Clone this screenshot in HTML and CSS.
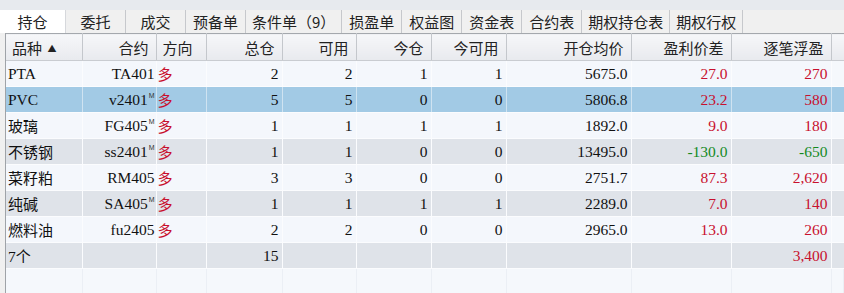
FILE: index.html
```html
<!DOCTYPE html>
<html lang="zh-CN">
<head>
  <meta charset="UTF-8">
  <link rel="stylesheet" href="styles.css">
  <title>持仓</title>
</head>
<body>

<div class="tabs">
  <div class="tab active">持仓</div>
  <div class="tab">委托</div>
  <div class="tab">成交</div>
  <div class="tab">预备单</div>
  <div class="tab">条件单（9）</div>
  <div class="tab">损盈单</div>
  <div class="tab">权益图</div>
  <div class="tab">资金表</div>
  <div class="tab">合约表</div>
  <div class="tab">期权持仓表</div>
  <div class="tab">期权行权</div>
</div>

<div class="grid">
  <table class="positions">
    <colgroup>
      <col style="width:76px"><col style="width:74px"><col style="width:50px">
      <col style="width:76px"><col style="width:74px"><col style="width:75px">
      <col style="width:75px"><col style="width:125px"><col style="width:100px">
      <col style="width:100px"><col>
    </colgroup>
    <thead>
      <tr>
        <th class="left">品种 <span class="sort">▲</span></th>
        <th>合约</th>
        <th class="left">方向</th>
        <th>总仓</th>
        <th>可用</th>
        <th>今仓</th>
        <th>今可用</th>
        <th>开仓均价</th>
        <th>盈利价差</th>
        <th>逐笔浮盈</th>
        <th class="rest"></th>
      </tr>
    </thead>
    <tbody>
      <tr>
        <td class="name">PTA</td><td class="code">TA401</td><td class="dir">多</td>
        <td class="num">2</td><td class="num">2</td><td class="num">1</td><td class="num">1</td>
        <td class="num">5675.0</td><td class="num up">27.0</td><td class="num up">270</td><td class="rest"></td>
      </tr>
      <tr class="selected">
        <td class="name">PVC</td><td class="code">v2401<sup class="m">M</sup></td><td class="dir">多</td>
        <td class="num">5</td><td class="num">5</td><td class="num">0</td><td class="num">0</td>
        <td class="num">5806.8</td><td class="num up">23.2</td><td class="num up">580</td><td class="rest"></td>
      </tr>
      <tr>
        <td class="name cn">玻璃</td><td class="code">FG405<sup class="m">M</sup></td><td class="dir">多</td>
        <td class="num">1</td><td class="num">1</td><td class="num">1</td><td class="num">1</td>
        <td class="num">1892.0</td><td class="num up">9.0</td><td class="num up">180</td><td class="rest"></td>
      </tr>
      <tr class="alt">
        <td class="name cn">不锈钢</td><td class="code">ss2401<sup class="m">M</sup></td><td class="dir">多</td>
        <td class="num">1</td><td class="num">1</td><td class="num">0</td><td class="num">0</td>
        <td class="num">13495.0</td><td class="num down">-130.0</td><td class="num down">-650</td><td class="rest"></td>
      </tr>
      <tr>
        <td class="name cn">菜籽粕</td><td class="code">RM405</td><td class="dir">多</td>
        <td class="num">3</td><td class="num">3</td><td class="num">0</td><td class="num">0</td>
        <td class="num">2751.7</td><td class="num up">87.3</td><td class="num up">2,620</td><td class="rest"></td>
      </tr>
      <tr class="alt">
        <td class="name cn">纯碱</td><td class="code">SA405<sup class="m">M</sup></td><td class="dir">多</td>
        <td class="num">1</td><td class="num">1</td><td class="num">1</td><td class="num">1</td>
        <td class="num">2289.0</td><td class="num up">7.0</td><td class="num up">140</td><td class="rest"></td>
      </tr>
      <tr>
        <td class="name cn">燃料油</td><td class="code">fu2405</td><td class="dir">多</td>
        <td class="num">2</td><td class="num">2</td><td class="num">0</td><td class="num">0</td>
        <td class="num">2965.0</td><td class="num up">13.0</td><td class="num up">260</td><td class="rest"></td>
      </tr>
      <tr class="alt total">
        <td class="name">7<span class="cn">个</span></td><td></td><td></td>
        <td class="num">15</td><td></td><td></td><td></td>
        <td></td><td></td><td class="num up">3,400</td><td class="rest"></td>
      </tr>
      <tr class="filler">
        <td></td><td></td><td></td><td></td><td></td><td></td><td></td><td></td><td></td><td></td><td class="rest"></td>
      </tr>
    </tbody>
  </table>
</div>

</body>
</html>
```

FILE: styles.css
```css
body {
  margin: 0;
  padding: 0;
  background-color: #f0f0f0;
  font-family: "Noto Sans CJK SC", "Liberation Sans", sans-serif;
  color: #1a1a1a;
  overflow: hidden;
}

.tabs {
  display: flex;
  height: 33px;
  padding-top: 10px;
  box-sizing: border-box;
  background: linear-gradient(#e7eaee 0, #e7eaee 10px, #f0f0f0 10px);
}

.tab {
  min-width: 60px;
  padding: 0 6px;
  box-sizing: border-box;
  height: 23px;
  line-height: 23px;
  font-size: 15px;
  text-align: center;
  color: #222;
  border-right: 1px solid #c6c8cc;
  background-color: #f0f0f0;
}

.tab.active {
  width: 66px;
  background-color: #fff;
  border-right: 1px solid #d6d8dc;
}

.grid {
  margin-left: 5px;
  border-left: 1px solid #9fa3a8;
  background-color: #f5f8fc;
  height: 260px;
}

.positions {
  border-collapse: collapse;
  table-layout: fixed;
  width: 100%;
}

.positions th {
  height: 26px;
  padding: 0 7px 0 0;
  font-size: 15px;
  font-weight: normal;
  text-align: right;
  color: #222;
  white-space: nowrap;
  background: linear-gradient(#f6f7f9, #e8eaee);
  border-top: 1px solid #a4a8ad;
  border-bottom: 1px solid #c9ccd1;
  border-right: 1px solid #c4c7cc;
}

.positions th.left {
  text-align: left;
  padding-left: 6px;
}

.positions th.rest {
  border-right: none;
}

.sort {
  font-size: 9px;
  vertical-align: 2px;
  margin-left: 2px;
}

.positions td {
  height: 25px;
  padding: 0 3px 0 0;
  font-family: "Liberation Serif", "Noto Sans CJK SC", serif;
  font-size: 15.5px;
  text-align: right;
  white-space: nowrap;
  color: #111;
  background-color: #f4f7fc;
  border-right: 1px solid #fbfcfe;
  border-bottom: 1px solid #fbfcfe;
}

.positions tr.alt td {
  background-color: #dfe3e9;
}

.positions tr.selected td {
  background-color: #a2cae5;
  border-right-color: #cfe3f1;
}

.positions td.rest {
  background-color: #f5f8fc;
  border-right: none;
}

.positions td.name {
  text-align: left;
  padding-left: 2px;
}

.positions .cn {
  font-family: "Noto Sans CJK SC", sans-serif;
  font-size: 15px;
}

.positions td.code {
  padding-right: 1px;
}

.m {
  font-family: "Liberation Sans", sans-serif;
  font-size: 7px;
  vertical-align: 7px;
  line-height: 0;
  margin-left: 1px;
  color: #333;
}

.positions td.dir {
  text-align: left;
  padding-left: 1px;
  font-family: "Noto Sans CJK SC", sans-serif;
  font-size: 15px;
  color: #c8102e;
}

.positions td.up {
  color: #c8102e;
}

.positions td.down {
  color: #138a1e;
}

.positions tr.filler td {
  background-color: #f5f8fc;
  border-right: 1px solid #ebeff5;
  border-bottom: none;
}
```
